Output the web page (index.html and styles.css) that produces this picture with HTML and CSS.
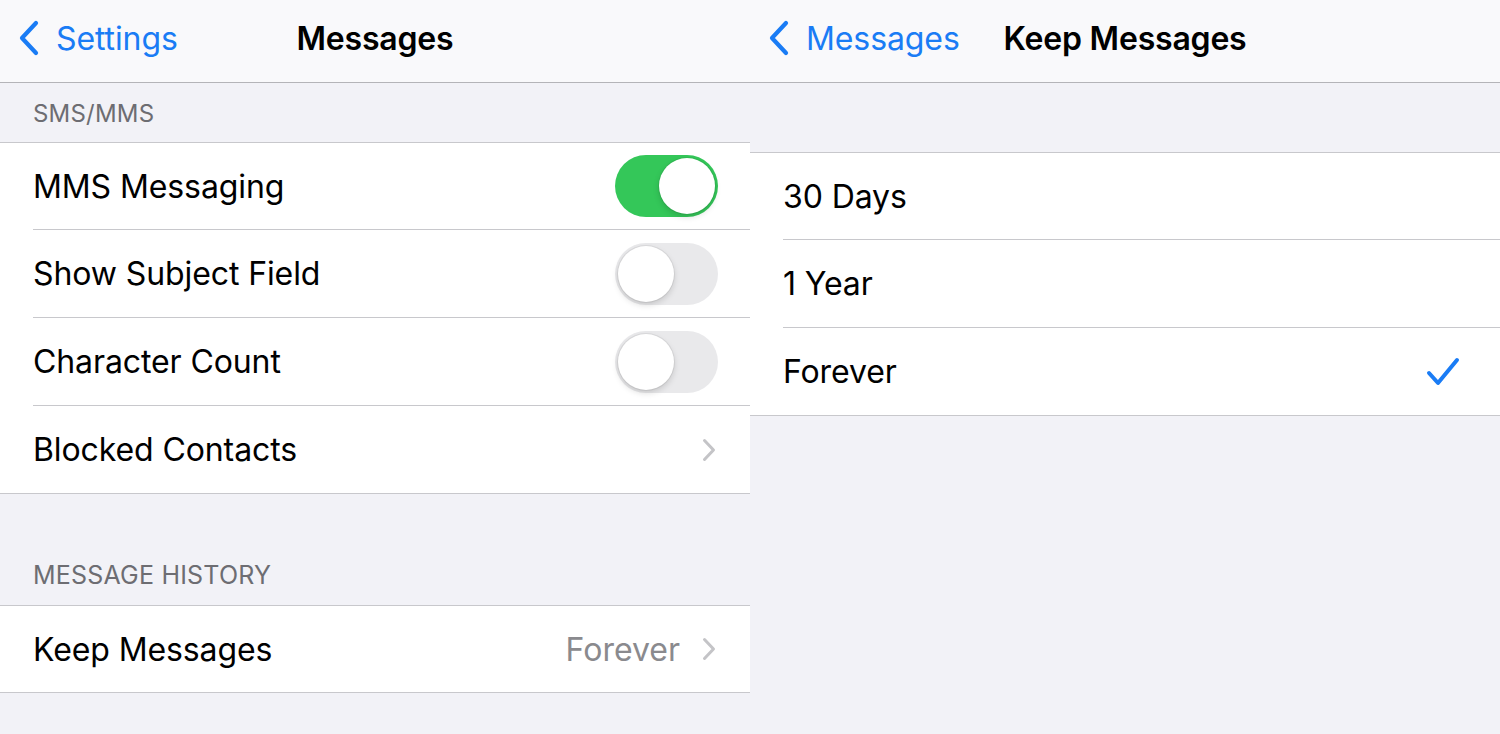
FILE: index.html
```html
<!DOCTYPE html>
<html>
<head>
<meta charset="utf-8">
<link rel="stylesheet" href="styles.css">
</head>
<body>
<div class="screen">
  <section class="pane">
    <header class="nav">
      <a class="back">
        <svg class="back-chev" viewBox="0 0 22 36" width="22" height="36"><path d="M18 3 L4 18 L18 33" fill="none" stroke="#1a7cf5" stroke-width="4.2" stroke-linecap="round" stroke-linejoin="round"/></svg>
        <span>Settings</span>
      </a>
      <h1 class="title">Messages</h1>
    </header>
    <div class="content">
      <div class="group-head">SMS/MMS</div>
      <div class="group">
        <div class="row"><span class="label">MMS Messaging</span><span class="toggle on"><span class="knob"></span></span></div>
        <div class="row"><span class="label">Show Subject Field</span><span class="toggle"><span class="knob"></span></span></div>
        <div class="row"><span class="label">Character Count</span><span class="toggle"><span class="knob"></span></span></div>
        <div class="row"><span class="label">Blocked Contacts</span><svg class="chev" viewBox="0 0 14 24" width="14" height="24"><path d="M2.5 2.5 L11.5 12 L2.5 21.5" fill="none" stroke="#c4c4c7" stroke-width="3" stroke-linecap="round" stroke-linejoin="round"/></svg></div>
      </div>
      <div class="group-head tall">MESSAGE HISTORY</div>
      <div class="group">
        <div class="row"><span class="label">Keep Messages</span><span class="value">Forever</span><svg class="chev" viewBox="0 0 14 24" width="14" height="24"><path d="M2.5 2.5 L11.5 12 L2.5 21.5" fill="none" stroke="#c4c4c7" stroke-width="3" stroke-linecap="round" stroke-linejoin="round"/></svg></div>
      </div>
    </div>
  </section>
  <section class="pane">
    <header class="nav">
      <a class="back">
        <svg class="back-chev" viewBox="0 0 22 36" width="22" height="36"><path d="M18 3 L4 18 L18 33" fill="none" stroke="#1a7cf5" stroke-width="4.2" stroke-linecap="round" stroke-linejoin="round"/></svg>
        <span>Messages</span>
      </a>
      <h1 class="title">Keep Messages</h1>
    </header>
    <div class="content">
      <div class="group-head blank"></div>
      <div class="group">
        <div class="row"><span class="label">30 Days</span></div>
        <div class="row"><span class="label">1 Year</span></div>
        <div class="row"><span class="label">Forever</span><svg class="check" viewBox="0 0 34 30" width="34" height="30"><path d="M3 16 L12 26 L31 3" fill="none" stroke="#1a7cf5" stroke-width="4" stroke-linecap="round" stroke-linejoin="round"/></svg></div>
      </div>
    </div>
  </section>
</div>
</body>
</html>
```

FILE: styles.css
```css
* { box-sizing: border-box; }
html, body { margin: 0; padding: 0; }
body {
  width: 1500px;
  height: 734px;
  overflow: hidden;
  background: #f2f2f7;
  font-family: Inter, "Liberation Sans", sans-serif;
  color: #000;
}
.screen {
  display: grid;
  grid-template-columns: 750px 750px;
  height: 734px;
}
.pane {
  display: flex;
  flex-direction: column;
  background: #f2f2f7;
  height: 734px;
}
.nav {
  position: relative;
  height: 83px;
  background: #f9f9fb;
  border-bottom: 1px solid #b4b4b8;
  display: flex;
  align-items: center;
  padding-left: 18px;
  padding-bottom: 6px;
}
.back {
  display: flex;
  align-items: center;
  gap: 16px;
  color: #1a7cf5;
  font-size: 32px;
  letter-spacing: -0.1px;
}
.title {
  position: absolute;
  left: 0;
  right: 0;
  top: 0;
  bottom: 6px;
  margin: 0;
  display: flex;
  align-items: center;
  justify-content: center;
  font-size: 32px;
  font-weight: 600;
  letter-spacing: -0.2px;
}
.group-head {
  height: 60px;
  padding: 0 33px 14px;
  display: flex;
  align-items: flex-end;
  font-size: 24px;
  color: #6d6d72;
  letter-spacing: 0.2px;
  border-bottom: 1px solid #c8c8cc;
}
.group-head.tall { height: 112px; font-size: 25px; padding-bottom: 15px; }
.group-head.blank { height: 70px; }
.group {
  background: #fff;
  border-bottom: 1px solid #c8c8cc;
}
.row {
  height: 88px;
  margin-left: 33px;
  padding-right: 32px;
  display: flex;
  align-items: center;
  border-bottom: 1px solid #c8c8cc;
}
.row:first-child { height: 87px; }
.row:last-child { border-bottom: none; height: 87px; }
.row:only-child { height: 86px; }
.label {
  flex: 1;
  font-size: 32px;
  letter-spacing: -0.1px;
}
.value {
  font-size: 32px;
  color: #8a8a8e;
  margin-right: 22px;
}
.chev { margin-right: 2px; }
.check { margin-right: 8px; }
.toggle {
  position: relative;
  width: 103px;
  height: 62px;
  border-radius: 31px;
  background: #e9e9eb;
  flex-shrink: 0;
}
.toggle .knob {
  position: absolute;
  top: 3px;
  left: 3px;
  width: 56px;
  height: 56px;
  border-radius: 50%;
  background: #fff;
  box-shadow: 0 3px 6px rgba(0,0,0,0.15), 0 0 0 1px rgba(0,0,0,0.06);
}
.toggle.on { background: #34c759; }
.toggle.on .knob { left: 44px; }
```
